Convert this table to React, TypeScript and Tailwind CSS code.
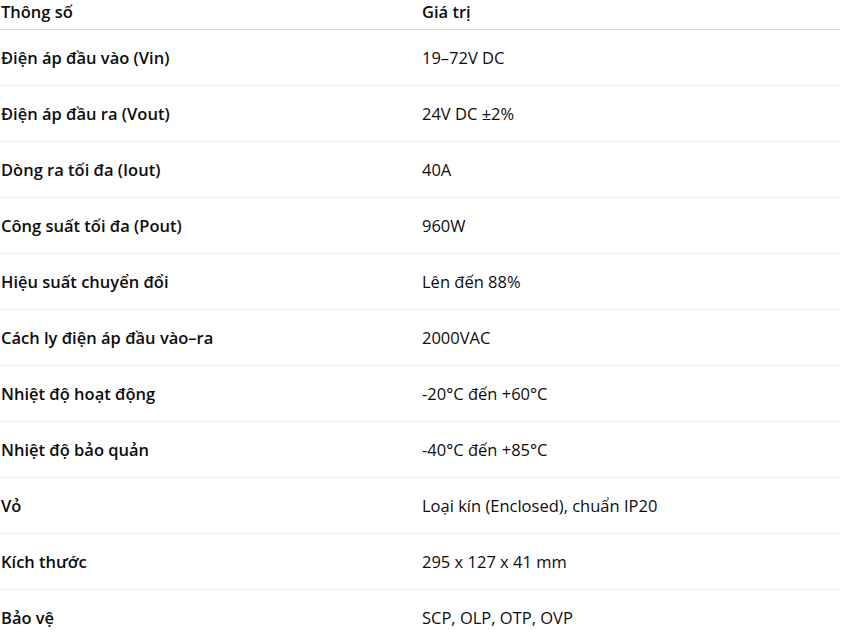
import React from 'react'

const rows: [string, string][] = [
    ['Điện áp đầu vào (Vin)', '19–72V DC'],
    ['Điện áp đầu ra (Vout)', '24V DC ±2%'],
    ['Dòng ra tối đa (Iout)', '40A'],
    ['Công suất tối đa (Pout)', '960W'],
    ['Hiệu suất chuyển đổi', 'Lên đến 88%'],
    ['Cách ly điện áp đầu vào–ra', '2000VAC'],
    ['Nhiệt độ hoạt động', '-20°C đến +60°C'],
    ['Nhiệt độ bảo quản', '-40°C đến +85°C'],
    ['Vỏ', 'Loại kín (Enclosed), chuẩn IP20'],
    ['Kích thước', '295 x 127 x 41 mm'],
    ['Bảo vệ', 'SCP, OLP, OTP, OVP'],
]

const App = () => {
    return (
        <div className="w-[841px] bg-white text-[#0d0d0d] text-[16.5px]" style={{ fontFamily: '"Open Sans", "Noto Sans", sans-serif' }}>
            <div className="mr-[1px]">
                {/* Header */}
                <div className="grid grid-cols-[422px_1fr] h-[30px] border-b border-[#d9d9d9] leading-6 font-semibold">
                    <div className="pl-[1px]">Thông số</div>
                    <div>Giá trị</div>
                </div>

                {/* Rows */}
                {rows.map(([k, v], i) => (
                    <div
                        key={i}
                        className={`grid grid-cols-[422px_1fr] items-center h-[56px] leading-6 ${i < rows.length - 1 ? 'border-b border-[#ececec]' : ''}`}
                    >
                        <div className="pl-[1px] font-semibold">{k}</div>
                        <div>{v}</div>
                    </div>
                ))}
            </div>
        </div>
    )
}

export default App
